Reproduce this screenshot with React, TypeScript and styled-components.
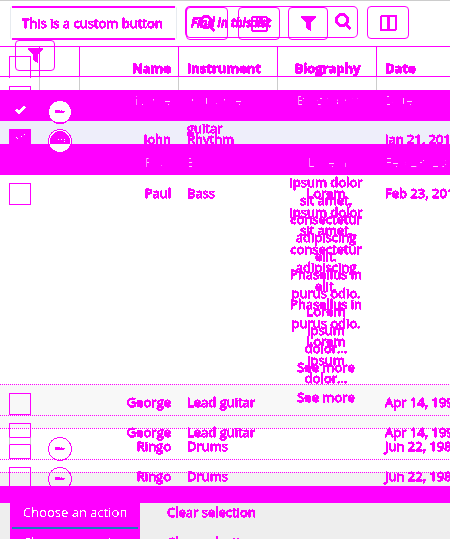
import React from 'react';
import styled, { createGlobalStyle } from 'styled-components';

const M = '#ff00ff';

const Global = createGlobalStyle`
  body { margin: 0; background: #fff; }
  * { box-sizing: border-box; }
`;

const Page = styled.main`
  display: grid;
  grid-template: 539px / 450px;
  width: 450px;
  height: 539px;
  overflow: hidden;
  font: 13px/18.4px "Open Sans", sans-serif;
  color: ${M};
`;

const Layer = styled.div`
  grid-area: 1 / 1;
  display: flex;
  flex-direction: column;
  min-width: 0;
  min-height: 0;
  overflow: hidden;
`;

const TextLayer = styled(Layer)`
  filter: url(#crisp);
  -webkit-text-stroke: 0.5px ${M};
`;

const SpeckLayer = styled(Layer)`
  filter: url(#specks);
  color: #fff;
`;

const LabelLayer = styled(Layer)`
  filter: url(#label);
  color: #fff;
`;

const Band = styled.div<{ $h: number; $bg?: string; $dots?: boolean }>`
  flex: none;
  height: ${p => p.$h}px;
  background: ${p => p.$bg ?? '#fff'};
  ${p => p.$dots && `
    background-image: repeating-linear-gradient(90deg, ${M} 0 1px, transparent 1px 2px);
    background-size: 100% 1px;
    background-repeat: no-repeat;
  `}
`;

const HeadGrid = styled.div<{ $h: number; $line: string; $ruled?: boolean }>`
  flex: none;
  display: grid;
  grid-template-columns: 40px 40px 99px 99px 99px 1fr;
  height: ${p => p.$h}px;
  border: 0 solid ${M};
  border-width: ${p => (p.$ruled ? '1px 0' : '0')};
  & > i { border-right: 1px solid ${p => p.$line}; }
  & > i:last-child { border: 0; }
`;

const Row = styled.div<{ $h: number; $bold?: boolean }>`
  flex: none;
  display: grid;
  grid-template-columns: 40px 40px 99px 99px 99px 1fr;
  height: ${p => p.$h}px;
  font-weight: ${p => (p.$bold ? 700 : 400)};
  white-space: nowrap;
`;

const Cell = styled.div<{ $align?: string }>`
  padding: 0 8px;
  min-width: 0;
  text-align: ${p => p.$align ?? 'left'};
`;

const BioCell = styled(Cell)<{ $long: boolean }>`
  text-align: center;
  padding-right: ${p => (p.$long ? 11 : 8)}px;
  line-height: ${p => (p.$long ? 18.55 : 18.4)}px;
`;

const Gap = styled.div<{ $h: number }>`
  flex: none;
  height: ${p => p.$h}px;
`;

const Box = styled.div<{ $h?: number; $fill?: boolean; $open?: boolean }>`
  display: grid;
  place-items: center;
  width: 22px;
  height: ${p => p.$h ?? 22}px;
  margin-left: 9px;
  border: 1px solid ${M};
  border-bottom-width: ${p => (p.$open ? 0 : 1)}px;
  background: ${p => (p.$fill ? M : 'transparent')};
`;

const SplitBox = styled(Box)`
  grid-template-rows: 13px 8px 1fr;
  place-items: stretch;
  padding: 0;
  border-width: 1px 0;
`;

const SplitPart = styled.span<{ $grey?: boolean }>`
  border: 0 solid ${p => (p.$grey ? '#ccc' : M)};
  border-width: 0 1px;
  ${p => p.$grey && `border-top: 1px solid ${M}; border-bottom: 1px solid ${M};`}
`;

const Controls = styled.div<{ $h: number }>`
  flex: none;
  display: grid;
  grid-template-columns: 48px 24px;
  align-items: start;
  height: ${p => p.$h}px;
`;

const Toolbar = styled.div<{ $pad: string }>`
  flex: none;
  display: flex;
  align-items: flex-start;
  padding: ${p => p.$pad};
`;

const CustomButton = styled.div`
  width: 167px;
  height: 34px;
  display: flex;
  flex-direction: column;
  border: 0 solid #e7ebf0;
  border-width: 0 1px;
  border-radius: 3px;
  padding: 0 1px;
  &::before, &::after { content: ''; height: 2px; background: ${M}; }
  &::after { margin-top: auto; }
`;

const IconButton = styled.div<{ $w: number; $h?: number; $ml?: number }>`
  flex: none;
  display: grid;
  place-items: center;
  width: ${p => p.$w}px;
  height: ${p => p.$h ?? 33}px;
  margin-left: ${p => p.$ml ?? 0}px;
  border: 1px solid ${M};
  border-radius: 4px;
`;

const SearchField = styled(IconButton)`
  justify-items: end;
  padding-right: 5px;
  border-left-width: 2px;
  border-radius: 5px;
`;

const Footer = styled.div`
  flex: none;
  display: grid;
  grid-template-columns: 130px;
  height: 36px;
  padding-left: 10px;
  background: #eee;
`;

const ActionButton = styled.div`
  background: ${M};
  padding: 24px 2px 0;
  &::after { content: ''; display: block; height: 2px; background: #197bc0; }
`;

const FooterText = styled.div<{ $pl: number; $h?: number }>`
  flex: none;
  height: ${p => p.$h ?? 30}px;
  padding-left: ${p => p.$pl}px;
  white-space: nowrap;
`;

const ToolbarText = styled.div`
  display: grid;
  grid-template-columns: 169px 1fr;
  height: 46px;
  padding: 14px 0 0 22px;
  flex: none;
  white-space: nowrap;
`;

const Placeholder = styled.span`
  font-style: italic;
  font-size: 12px;
  font-weight: 600;
`;

const Defs = styled.svg`
  grid-area: 1 / 1;
`;

const Icon = styled.svg`
  display: block;
  overflow: visible;
`;

const Search = () => (
  <Icon width="17" height="18" viewBox="0 0 17 18" fill="none" stroke={M} shapeRendering="crispEdges">
    <circle cx="7" cy="7" r="5.6" strokeWidth="3" /><path d="M10.5 11 15.5 16" strokeWidth="3" />
  </Icon>
);
const Funnel = () => (
  <Icon width="15" height="15" viewBox="0 0 15 15" shapeRendering="crispEdges">
    <path d="M0 0h15v2L9.6 7v8L5 12V7L0 2Z" fill={M} />
  </Icon>
);
const Columns = () => (
  <Icon width="17" height="16" viewBox="0 0 17 16" fill="none" stroke={M} strokeWidth="2" shapeRendering="crispEdges">
    <rect x="1" y="1" width="15" height="14" rx="1" /><path d="M8.5 1v14" strokeWidth="3" />
  </Icon>
);
const Calendar = () => (
  <Icon width="17" height="16" viewBox="0 0 17 16" fill="none" stroke={M} strokeWidth="2" shapeRendering="crispEdges">
    <rect x="1" y="1" width="15" height="14" rx="2" /><path d="M1 5h15M2 10h13M5.5 2v9M11 2v9" />
  </Icon>
);
const Check = ({ thin }: { thin?: boolean }) => (
  <Icon width="11" height="8" viewBox="0 0 11 8" fill="none" stroke="#fff" shapeRendering="crispEdges">
    {thin
      ? <path d="M1 4.5h1M2 5.5h1M6 3.5h1M9 1.5h1" />
      : <path d="M1 3.5 4 6.5 10 .5" strokeWidth="2.8" />}
  </Icon>
);
const Disc = ({ kind = 'ring' }: { kind?: 'ring' | 'white' | 'dark' }) => (
  <Icon width="24" height="24" viewBox="0 0 24 24" shapeRendering="crispEdges">
    <circle cx="12" cy="12" r="11.5" fill={kind === 'ring' ? 'none' : '#fff'} stroke={M} />
    {kind === 'dark'
      ? <><path d="M2 15V12a10 10 0 0 1 20 0v3Z" fill={M} /><path d="M10 10.5h1M13 10.5h1M15.5 10.5h1M15.5 12.5h1" stroke="#fff" /></>
      : <path d="M7 10.5h5M13 10.5h1M7 11.5h10M7 12.5h9" stroke={M} />}
    {kind === 'white' && <path d="M7 22.5h10M8 23.5h8" stroke={M} />}
  </Icon>
);

const BIO = ['Lorem', 'ipsum dolor', 'sit amet,', 'consectetur', 'adipiscing', 'elit.', 'Phasellus in', 'purus odio.', 'Lorem', 'ipsum', 'dolor…', 'See more'];

type RecordProps = { h: number; name?: string; instrument?: string; bio?: string[]; date?: string; bold?: boolean };
const Record = ({ h, name, instrument, bio = [], date, bold }: RecordProps) => (
  <Row $h={h} $bold={bold}>
    <span /><span />
    <Cell $align="right">{name}</Cell>
    <Cell>{instrument}</Cell>
    <BioCell $long={bio.length > 1}>{bio.map((line, i) => <div key={i}>{line}</div>)}</BioCell>
    <Cell>{date}</Cell>
  </Row>
);

const Header = ({ h, bold }: { h: number; bold?: boolean }) => (
  <Record h={h} name="Name" instrument="Instrument" bio={['Biography']} date="Date" bold={bold} />
);

const Lines = ({ color, h, ruled }: { color: string; h: number; ruled?: boolean }) => (
  <HeadGrid $h={h} $line={color} $ruled={ruled}><i /><i /><i /><i /><i /><i /></HeadGrid>
);

export default function App() {
  return (
    <Page>
      <Global />
      <Layer>
        <Band $h={1} $bg="#ccc" />
        <Band $h={45} />
        <Lines h={31} color={M} ruled />
        <Lines h={13} color="#ccc" />
        <Band $h={31} $bg={M} />
        <Band $h={23} $bg="#eeeefa" />
        <Band $h={31} $bg={M} />
        <Band $h={209} />
        <Band $h={31} $bg="#f8f8f8" $dots />
        <Band $h={13} $bg="#f8f8f8" $dots />
        <Band $h={31} $dots />
        <Band $h={13} $dots />
        <Band $h={14} $bg="#f2f2f2" $dots />
        <Band $h={17} $bg={M} />
        <Footer><ActionButton /></Footer>
      </Layer>

      <Layer>
        <Toolbar $pad="6px 0 0 10px">
          <CustomButton />
          <SearchField $w={173} $h={32} $ml={8}><Search /></SearchField>
          <IconButton $w={42} $ml={9}><Columns /></IconButton>
        </Toolbar>
        <Gap $h={15} />
        <Gap $h={1} />
        <Controls $h={30}><Box $open /></Controls>
        <Controls $h={14}><Box $h={5} $open /></Controls>
        <Controls $h={29}><Box $h={20} $fill><Check /></Box><Disc kind="white" /></Controls>
        <Controls $h={54}><Box $h={15} $fill><Check thin /></Box><Disc kind="dark" /></Controls>
        <Controls $h={210}><Box /></Controls>
        <Controls $h={30}><Box /></Controls>
        <Controls $h={14}><SplitBox $h={36}><SplitPart /><SplitPart $grey /><SplitPart /></SplitBox></Controls>
        <Controls $h={30}><span /><Disc /></Controls>
        <Controls $h={30}><Box $h={19} $open /><Disc /></Controls>
      </Layer>

      <Layer>
        <Toolbar $pad="7px 0 0 186px">
          <IconButton $w={42}><Search /></IconButton>
          <IconButton $w={42} $ml={10}><Calendar /></IconButton>
          <IconButton $w={40} $ml={8}><Funnel /></IconButton>
        </Toolbar>
        <Toolbar $pad="0 0 0 15px">
          <IconButton $w={40} $h={31}><Funnel /></IconButton>
        </Toolbar>
      </Layer>

      <TextLayer>
        <ToolbarText><span>This is a custom button</span><Placeholder>Find in this list</Placeholder></ToolbarText>
        <Gap $h={13} />
        <Header h={60} bold />
        <Record h={35} instrument="guitar" />
        <Record h={239} bio={BIO} />
        <Record h={44} name="George" instrument="Lead guitar" date="Apr 14, 1995" />
        <Record h={66} name="Ringo" instrument="Drums" date="Jun 22, 1985" />
        <FooterText $pl={167}>Clear selection</FooterText>
        <FooterText $pl={167}>Clear selection</FooterText>
      </TextLayer>

      <TextLayer>
        <Gap $h={130} />
        <Record h={54} name="John" instrument="Rhythm" date="Jan 21, 2018" />
        <Record h={239} name="Paul" instrument="Bass" bio={BIO} date="Feb 23, 2017" />
        <Record h={44} name="George" instrument="Lead guitar" date="Apr 14, 1995" />
        <Record h={60} name="Ringo" instrument="Drums" date="Jun 22, 1985" />
      </TextLayer>

      <SpeckLayer>
        <Gap $h={91} />
        <Header h={62} />
        <Record h={350} name="Paul" instrument="Bass" bio={['Lorem']} date="Feb 23, 2017" />
      </SpeckLayer>

      <LabelLayer>
        <Gap $h={503} />
        <FooterText $pl={23}>Choose an action</FooterText>
        <FooterText $pl={23}>Choose an action</FooterText>
      </LabelLayer>

      <Defs width="0" height="0">
        <filter id="crisp" x="0" y="0" width="100%" height="100%" colorInterpolationFilters="sRGB">
          <feComponentTransfer><feFuncA type="discrete" tableValues="0 1 1 1 1 1" /></feComponentTransfer>
        </filter>
        <filter id="specks" x="0" y="0" width="100%" height="100%" colorInterpolationFilters="sRGB">
          <feComponentTransfer><feFuncA type="linear" slope="24" intercept="-23.2" /></feComponentTransfer>
        </filter>
        <filter id="label" x="0" y="0" width="100%" height="100%" colorInterpolationFilters="sRGB">
          <feComponentTransfer><feFuncA type="discrete" tableValues="0 0 1 1" /></feComponentTransfer>
        </filter>
      </Defs>
    </Page>
  );
}
